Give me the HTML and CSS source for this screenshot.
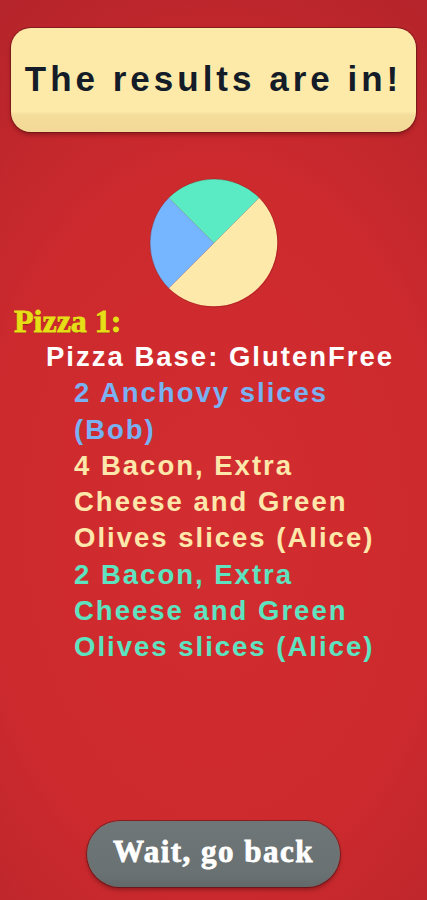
FILE: index.html
```html
<!DOCTYPE html>
<html lang="en">
<head>
    <meta charset="UTF-8">
    <meta name="viewport" content="width=device-width, initial-scale=1.0">
    <title>Results</title>
    <link rel="stylesheet" href="styles.css">
</head>
<body>
    <div class="tela">
        <div class="titulo">
            <h1>The results are in!</h1>
        </div>

        <div class="grafico">
            <!-- pizza chart: 2 anchovy, 4 + 2 bacon slices -->
            <svg width="130" height="130" viewBox="0 0 130 130">
                <path d="M65 65 L110.25 19.75 A64 64 0 0 1 19.75 110.25 Z" fill="#fde9a9"/>
                <path d="M65 65 L19.75 110.25 A64 64 0 0 1 19.75 19.75 Z" fill="#76b5ff"/>
                <path d="M65 65 L19.75 19.75 A64 64 0 0 1 110.25 19.75 Z" fill="#5aebc4"/>
                <circle cx="65" cy="65" r="64" fill="none" stroke="rgba(120,20,20,0.35)" stroke-width="1"/>
            </svg>
        </div>

        <div class="pizza">
            <h2>Pizza 1:</h2>
            <p class="base">Pizza Base: GlutenFree</p>
            <ul class="fatias">
                <li class="azul">2 Anchovy slices (Bob)</li>
                <li class="creme">4 Bacon, Extra Cheese and Green Olives slices (Alice)</li>
                <li class="verde">2 Bacon, Extra Cheese and Green Olives slices (Alice)</li>
            </ul>
        </div>

        <div class="rodape">
            <button class="voltar">Wait, go back</button>
        </div>
    </div>
</body>
</html>
```

FILE: styles.css
```css
* {
    box-sizing: border-box;
}

body {
    margin: 0;
    font-family: "Liberation Sans", Arial, sans-serif;
    background: radial-gradient(ellipse 95% 70% at 50% 58%, #d22d30 0%, #cd2a2e 55%, #b3242a 100%);
    background-color: #c8282c;
}

.tela {
    height: 900px;
    display: flex;
    flex-direction: column;
    overflow: hidden;
}

.titulo {
    margin: 28px 11px 0 11px;
    height: 104px;
    border-radius: 20px;
    background: linear-gradient(to bottom, #fdeaa9 0%, #fdeaa9 80%, #f4dc9b 84%, #f2d997 100%);
    box-shadow: 0 0 0 1px rgba(90, 20, 20, 0.55), 0 3px 4px rgba(60, 0, 0, 0.35);
    display: flex;
    align-items: center;
    justify-content: center;
    padding-bottom: 2px;
}

h1 {
    margin: 0;
    font-size: 35px;
    font-weight: bold;
    letter-spacing: 4px;
    color: #141c28;
    line-height: 40px;
}

.grafico {
    margin-top: 46px;
    display: flex;
    justify-content: center;
}

.grafico svg {
    display: block;
}

.pizza {
    margin-top: -3px;
    padding-left: 14px;
}

h2 {
    margin: 0;
    font-family: "Liberation Serif", "Times New Roman", serif;
    font-size: 32px;
    line-height: 32px;
    font-weight: bold;
    color: #e6df17;
    -webkit-text-stroke: 0.8px #e6df17;
    text-shadow: 0 1px 1px rgba(80, 40, 0, 0.6);
}

.base {
    margin: 2px 0 0 32px;
    font-size: 27.5px;
    line-height: 36.3px;
    font-weight: bold;
    letter-spacing: 2px;
    color: #ffffff;
}

.fatias {
    list-style: none;
    margin: 0 0 0 60px;
    padding: 0;
    width: 322px;
}

.fatias li {
    font-size: 27.5px;
    line-height: 36.3px;
    font-weight: bold;
    letter-spacing: 2px;
}

.azul {
    color: #7ab1f2;
}

.creme {
    color: #fde7aa;
}

.verde {
    color: #5ee3c0;
}

.rodape {
    margin-top: auto;
    padding-bottom: 13px;
    display: flex;
    justify-content: center;
}

.voltar {
    width: 253px;
    height: 66px;
    border: none;
    border-radius: 33px;
    background: linear-gradient(to bottom, #6e7677 0%, #697172 80%, #62696a 100%);
    box-shadow: 0 0 0 1px rgba(60, 20, 20, 0.5), 0 3px 4px rgba(40, 0, 0, 0.35);
    color: #ffffff;
    font-family: "Liberation Serif", "Times New Roman", serif;
    font-size: 31px;
    font-weight: bold;
    letter-spacing: 1.5px;
    -webkit-text-stroke: 0.8px #ffffff;
    padding: 0 0 4px 0;
    cursor: pointer;
}
```
